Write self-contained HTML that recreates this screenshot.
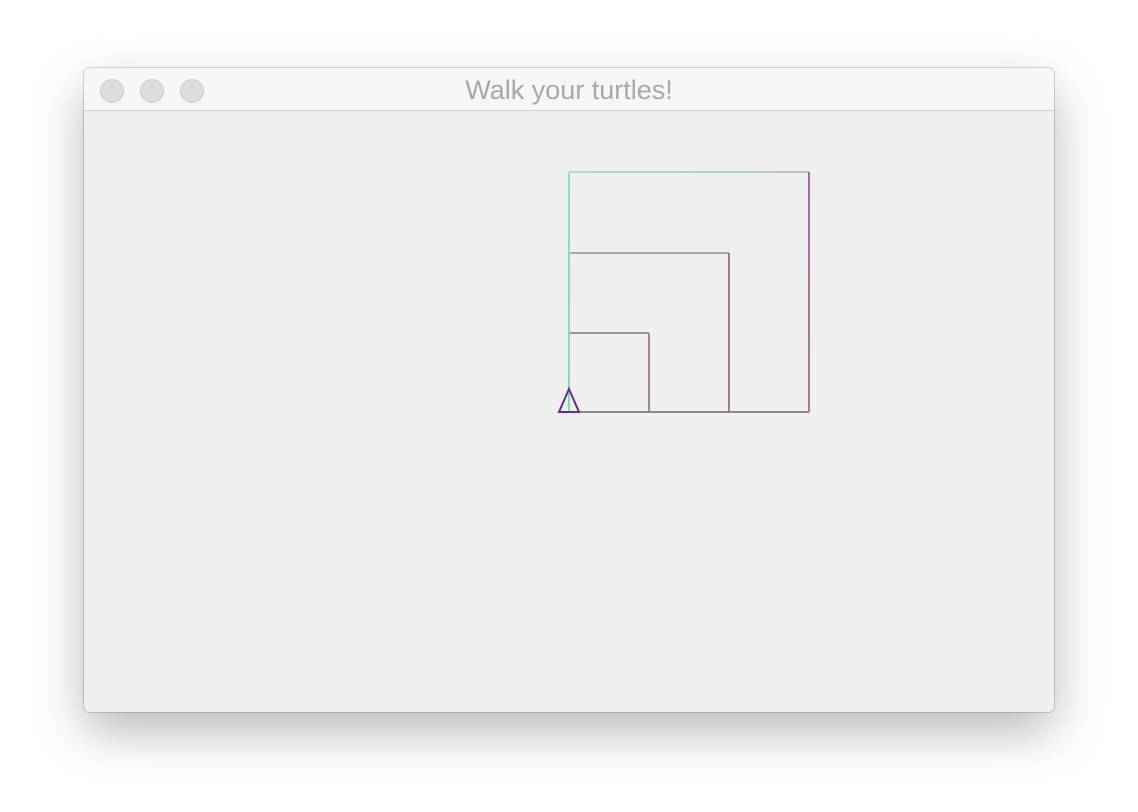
<!DOCTYPE html>
<html><head><style>
html,body{margin:0;padding:0;background:#fff;width:1138px;height:812px;overflow:hidden;font-family:"Liberation Sans",sans-serif}
.win{position:absolute;left:84px;top:68px;width:970px;height:644px;border-radius:6px;background:#efefef;box-shadow:0 20px 50px rgba(0,0,0,0.28),0 0 0 1px rgba(0,0,0,0.15);overflow:hidden}
.bar{position:absolute;left:0;top:0;width:970px;height:42px;background:#f6f6f6;border-bottom:1px solid #d0d0d0}
.c{position:absolute;top:11px;width:24px;height:24px;border-radius:50%;background:#dcdcdc;border:1px solid #cfcfcf;box-sizing:border-box}
.t{position:absolute;left:0;width:970px;top:7px;text-align:center;font-size:27px;color:#a8a8a8}
</style></head><body>
<div class="win">
<div class="bar">
<div class="c" style="left:16px"></div><div class="c" style="left:56px"></div><div class="c" style="left:96px"></div>
<div class="t">Walk your turtles!</div>
</div>
</div>
<svg width="1138" height="812" style="position:absolute;left:0;top:0">
<defs>
<linearGradient id="g1" gradientUnits="userSpaceOnUse" x1="0" y1="412" x2="0" y2="172"><stop offset="0" stop-color="#78e0b0"/><stop offset="1" stop-color="#88e4bc"/></linearGradient>
<linearGradient id="gt" gradientUnits="userSpaceOnUse" x1="569" y1="0" x2="809" y2="0"><stop offset="0" stop-color="#9ee0c8"/><stop offset="1" stop-color="#b4c8c4"/></linearGradient>
<linearGradient id="gr" gradientUnits="userSpaceOnUse" x1="0" y1="172" x2="0" y2="412"><stop offset="0" stop-color="#b06a90"/><stop offset="1" stop-color="#988490"/></linearGradient>
</defs>
<g fill="none" stroke-width="2" shape-rendering="crispEdges">
<line x1="569" y1="172" x2="809" y2="172" stroke="url(#gt)"/>
<line x1="809" y1="172" x2="809" y2="412" stroke="url(#gr)"/>
<line x1="569" y1="253" x2="729" y2="253" stroke="#98b0a8"/>
<line x1="729" y1="253" x2="729" y2="412" stroke="#a07890"/>
<line x1="569" y1="333" x2="649" y2="333" stroke="#909a96"/>
<line x1="649" y1="333" x2="649" y2="412" stroke="#988890"/>
<line x1="569" y1="412" x2="809" y2="412" stroke="#8a8a8a"/>
<line x1="569" y1="172" x2="569" y2="412" stroke="url(#g1)"/>
</g>
<path d="M569 389 L559 412 L579 412 Z" fill="none" stroke="#6a2a8a" stroke-width="2"/>
</svg>
</body></html>
